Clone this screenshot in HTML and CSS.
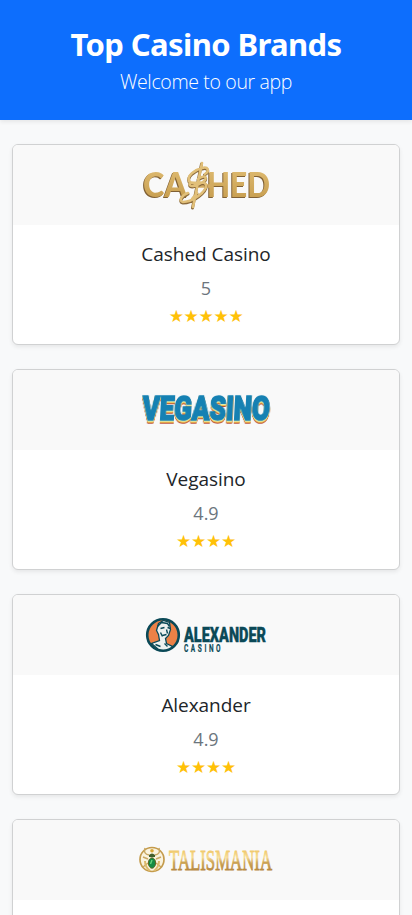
FILE: index.html
```html
<!DOCTYPE html>
<html lang="en">
<head>
<meta charset="utf-8">
<meta name="viewport" content="width=device-width, initial-scale=1">
<title>Top Casino Brands</title>
<link rel="stylesheet" href="styles.css">
</head>
<body>
<header class="hero">
  <h1 class="hero-title">Top Casino Brands</h1>
  <p class="hero-lead">Welcome to our app</p>
</header>
<main class="brands">
  <article class="card">
    <div class="card-logo">
      <svg width="150" height="60" viewBox="0 0 150 60" role="img" aria-label="Cashed">
        <defs>
          <linearGradient id="gold" x1="0" y1="0" x2="0" y2="1">
            <stop offset="0" stop-color="#e2bf76"/><stop offset="1" stop-color="#c49a4b"/>
          </linearGradient>
        </defs>
        <g class="cashed">
          <text x="12" y="42" textLength="44" lengthAdjust="spacingAndGlyphs">CA</text>
          <text x="76" y="42" textLength="63" lengthAdjust="spacingAndGlyphs">HED</text>
          <path d="M67 31H82" stroke="#d3ab61" stroke-width="3.4"/>
        </g>
        <g fill="none" stroke-linecap="round" stroke-linejoin="round">
          <path d="M70.500 9L61.500 53M73.500 20C79 17 77 12 71 14C63 16 56 22 58 27C60 32 74 25 75 31C76 37 62 48 52 48C47 47 51 41 57 39M67 25C75 20 77 24 72 28C66 32 57 34 59 29M66 39L61 45" stroke="#8a693b" stroke-width="3"/>
          <path d="M71 8L62 52M74 19C79 16 77 11 71 13C63 15 56 21 58 26C60 31 74 24 75 30C76 36 62 47 52 47C47 46 51 40 57 38M67 24C75 19 77 23 72 27C66 31 57 33 59 28M66 38L61 44" stroke="#e1bf78" stroke-width="2.600"/>
        </g>
      </svg>
    </div>
    <div class="card-body">
      <h2 class="card-title">Cashed Casino</h2>
      <p class="rating">5</p>
      <div class="stars">★★★★★</div>
    </div>
  </article>
  <article class="card">
    <div class="card-logo">
      <svg width="150" height="60" viewBox="0 0 150 60" role="img" aria-label="Vegasino">
        <g class="vegasino" transform="skewX(-3)">
          <text x="13" y="39.500" textLength="127.500" lengthAdjust="spacingAndGlyphs">VEGASINO</text>
        </g>
      </svg>
    </div>
    <div class="card-body">
      <h2 class="card-title">Vegasino</h2>
      <p class="rating">4.9</p>
      <div class="stars">★★★★</div>
    </div>
  </article>
  <article class="card">
    <div class="card-logo">
      <svg width="150" height="60" viewBox="0 0 150 60" role="img" aria-label="Alexander Casino">
        <circle cx="32" cy="30" r="15.800" fill="#ed8146" stroke="#0b4957" stroke-width="2.600"/>
        <g transform="translate(-1.500 .5)">
          <path d="M29 18L34 15L40 17L41 24L39 30L36 33L37 38L43 41Q38 46 29 44L22 38L30 35L29 29L27 25Z" fill="#edf1ef" stroke="#0b4957" stroke-width="1.300"/>
          <path d="M28 21L32 17L38 18L40 21M31 23L35 22M38 22L41 23M37 24L38 28M33 30L37 29M31 27L33 31M26 39L31 41M35 38L38 41" fill="none" stroke="#0b4957" stroke-width="1.400"/>
        </g>
        <g class="alexander">
          <text x="53" y="37" textLength="82" lengthAdjust="spacingAndGlyphs">ALEXANDER</text>
          <text class="alexander-sub" transform="translate(53 47) scale(.62 1)" textLength="59" lengthAdjust="spacing">CASINO</text>
        </g>
      </svg>
    </div>
    <div class="card-body card-body-low">
      <h2 class="card-title">Alexander</h2>
      <p class="rating">4.9</p>
      <div class="stars">★★★★</div>
    </div>
  </article>
  <article class="card">
    <div class="card-logo">
      <svg width="150" height="60" viewBox="0 0 150 60" role="img" aria-label="Talismania">
        <defs>
          <linearGradient id="bronze" x1="0" y1="0" x2="0" y2="1">
            <stop offset=".2" stop-color="#eec462"/><stop offset=".45" stop-color="#f7dc94"/><stop offset=".6" stop-color="#cda453"/><stop offset="1" stop-color="#a97736"/>
          </linearGradient>
        </defs>
        <circle cx="21" cy="29.500" r="12" fill="#faf3df" stroke="#c49b4c" stroke-width="1.700"/>
        <path d="M18 25Q12 24 14 18M24 25Q30 24 28 18M17 29L12 27M25 29L30 27M17 33L12 37M25 33L30 37" fill="none" stroke="#c9a863" stroke-width="1.500"/>
        <path d="M14 31Q14 37 19 41M28 31Q28 37 23 41" fill="none" stroke="#ddba6b" stroke-width="2"/>
        <circle cx="21" cy="20.800" r="1.800" fill="#d8a735"/>
        <path d="M18 25Q21 22 24 25V27H18Z" fill="#425f2c"/>
        <ellipse cx="21" cy="33" rx="3.600" ry="5.200" fill="#148b43" stroke="#5e6725"/>
        <path d="M21 30L19.500 34" stroke="#64d47d" stroke-width="1.400"/>
        <text class="talismania" fill="url(#bronze)" stroke="url(#bronze)" x="38" y="39.500" textLength="103" lengthAdjust="spacingAndGlyphs">TALISMANIA</text>
      </svg>
    </div>
  </article>
</main>
</body>
</html>
```
FILE: styles.css
```css
* { box-sizing: border-box; }

html { overflow: hidden; }

body {
  margin: 0;
  height: 915px;
  overflow: hidden;
  background: #f8f9fa;
  color: #212529;
  font-family: "Open Sans", "Noto Sans", sans-serif;
  text-align: center;
}

h1, h2, p { margin: 0; }

.hero {
  height: 120px;
  padding-top: 23px;
  background: #0d6efd;
  color: #fff;
  box-shadow: 0 2px 4px rgba(0, 0, 0, .075);
}

.hero-title {
  font-family: "Noto Sans", sans-serif;
  font-size: 31px;
  line-height: 42px;
  font-weight: 700;
  letter-spacing: -.6px;
  white-space: nowrap;
}

.hero-lead {
  padding-top: 2px;
  font-size: 19.5px;
  line-height: 30px;
  font-weight: 300;
  letter-spacing: -.35px;
}

.brands {
  display: flex;
  flex-direction: column;
  gap: 24px;
  padding: 24px 12px;
}

.card {
  height: 201.1px;
  flex: none;
  overflow: hidden;
  background: #fff;
  border: 1px solid #d0d1d2;
  border-radius: 6px;
  box-shadow: 0 2px 4px rgba(0, 0, 0, .075);
}

.card-logo {
  height: 80px;
  display: flex;
  align-items: center;
  justify-content: center;
  background: #f9f9f9;
}

.card-logo svg { overflow: visible; }

.card-body { padding-top: 16.3px; }

.card-body-low { padding-top: 17px; }

.card-title {
  height: 32px;
  font-size: 19px;
  line-height: 26px;
  font-weight: 400;
  letter-spacing: -.05px;
}

.rating {
  height: 30px;
  color: #6c757d;
  font-size: 18px;
  line-height: 30px;
}

.stars {
  color: #ffc107;
  font-family: "DejaVu Sans", sans-serif;
  font-size: 17px;
  line-height: 26px;
  letter-spacing: .4px;
  letter-spacing: -.3px;
}

.cashed {
  fill: url(#gold);
  font-family: Lato, sans-serif;
  font-size: 34px;
  font-weight: 900;
}

.cashed text { filter: drop-shadow(-.6px 1.2px 0 #806034); }

.vegasino {
  fill: #1681b3;
  stroke: #1681b3;
  stroke-width: 1.6px;
  font-family: Roboto, sans-serif;
  font-size: 34px;
  font-weight: 900;
  filter: drop-shadow(0 1px 0 #dcedb4) drop-shadow(0 1.5px 0 #f2c64c) drop-shadow(0 1.4px 0 #b84832);
}

.alexander {
  fill: #0b4957;
  stroke: #0b4957;
  stroke-width: .4px;
  font-family: Roboto, sans-serif;
  font-size: 21px;
  font-weight: 900;
}

.alexander-sub {
  stroke-width: .2px;
  font-size: 10.5px;
  font-weight: 700;
}

.talismania {
  font-family: "Liberation Serif", serif;
  font-size: 30px;
  font-weight: 400;
  stroke-width: .9px;
}
```
